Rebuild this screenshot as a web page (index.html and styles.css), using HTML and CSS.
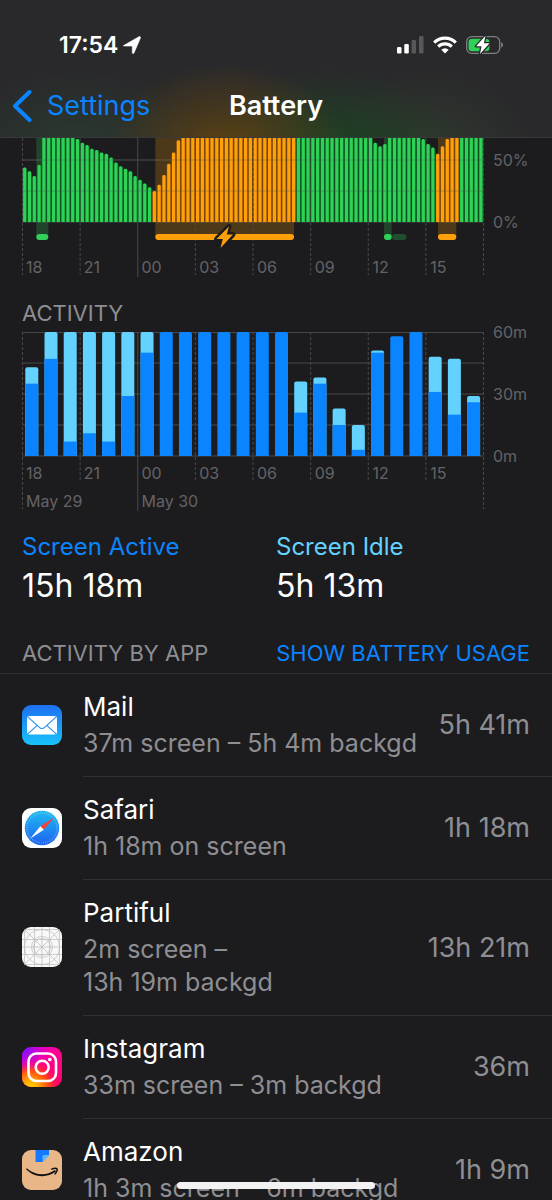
FILE: index.html
```html
<!DOCTYPE html>
<html lang="en">
<head>
<meta charset="utf-8">
<meta name="viewport" content="width=device-width, initial-scale=1">
<title>Battery</title>
<link rel="stylesheet" href="styles.css">
</head>
<body>
<header class="topbar">
  <div class="status">
    <div class="status-left">
      <span class="clock">17:54</span>
      <svg class="icon-location" viewBox="0 0 18 18" aria-hidden="true"><path d="M1 9.300 16 .7c.9-.5 1.800.4 1.400 1.300L11 16.900c-.5 1.100-1.700.9-1.700-.3V10H1.600C.3 10 0 9.800 1 9.300z" fill="#fff" stroke="#fff" stroke-width=".6" stroke-linejoin="round"/></svg>
    </div>
    <div class="status-right">
      <svg class="icon-signal" viewBox="0 0 27 18" aria-hidden="true">
        <rect x="0" y="11" width="4.500" height="6.500" rx="1.300" fill="#fff"/><rect x="7.300" y="8" width="4.500" height="9.500" rx="1.300" fill="#fff"/><rect x="14.600" y="4" width="4.500" height="13.500" rx="1.300" fill="#58585a"/><rect x="22" y="0" width="4.500" height="17.500" rx="1.300" fill="#58585a"/>
      </svg>
      <svg class="icon-wifi" viewBox="0 0 24 18" aria-hidden="true"><g fill="none" stroke="#fff" stroke-width="3.200"><path d="M1.200 6.600a15.300 15.300 0 0 1 21.600 0"/><path d="M5.200 10.700a9.600 9.600 0 0 1 13.600 0"/></g><path d="M8.300 13.700a5.300 5.300 0 0 1 7.400 0L12 17.500z" fill="#fff"/></svg>
      <svg class="icon-battery" viewBox="0 0 38 20" aria-hidden="true">
        <rect x=".7" y="1.700" width="33" height="16.600" rx="5" fill="none" stroke="#808083" stroke-width="1.300"/>
        <path d="M35.200 7.300c2.400.8 2.400 4.600 0 5.400z" fill="#808083"/>
        <path d="M6 3.800h14a3.500 3.500 0 0 1 3.500 3.500v5.400a3.500 3.500 0 0 1-3.500 3.500H6a3.500 3.500 0 0 1-3.500-3.500V7.300A3.500 3.500 0 0 1 6 3.800z" fill="#30d158"/>
        <path d="M19.500.8 10 11.300h5.500L14 19l9.600-10.700h-5.700z" fill="#fff" stroke="#29292b" stroke-width="2.600" stroke-linejoin="round" paint-order="stroke"/>
      </svg>
    </div>
  </div>
  <nav class="nav">
    <a class="back" href="#settings">
      <svg class="icon-back" viewBox="0 0 20 34" aria-hidden="true"><path d="M17.500 3 3 17l14.500 14" fill="none" stroke="#0a84ff" stroke-width="4" stroke-linecap="round" stroke-linejoin="round"/></svg>
      <span>Settings</span>
    </a>
    <h1 class="title">Battery</h1>
  </nav>
</header>

<main class="content">
  <section class="chart chart-level" aria-label="Battery level">
    <svg class="plot" id="level" viewBox="0 0 462 179" preserveAspectRatio="none" aria-hidden="true"></svg>
    <div class="hours"><span>18</span><span>21</span><span>00</span><span>03</span><span>06</span><span>09</span><span>12</span><span>15</span></div>
    <div class="scale"><span>100%</span><span>50%</span><span>0%</span></div>
  </section>

  <h2 class="heading chart-heading">ACTIVITY</h2>
  <section class="chart chart-activity" aria-label="Activity">
    <svg class="plot" id="activity" viewBox="0 0 462 179" preserveAspectRatio="none" aria-hidden="true"></svg>
    <div class="hours"><span>18</span><span>21</span><span>00</span><span>03</span><span>06</span><span>09</span><span>12</span><span>15</span><span class="day">May 29</span><span class="day">May 30</span></div>
    <div class="scale"><span>60m</span><span>30m</span><span>0m</span></div>
  </section>

  <dl class="totals">
    <div><dt class="active">Screen Active</dt><dd>15h 18m</dd></div>
    <div><dt class="idle">Screen Idle</dt><dd>5h 13m</dd></div>
  </dl>

  <div class="list-header">
    <h2 class="heading">ACTIVITY BY APP</h2>
    <button class="toggle" type="button">SHOW BATTERY USAGE</button>
  </div>
  <ul class="apps">
    <li class="app">
      <svg class="app-icon" viewBox="0 0 40 40" aria-hidden="true">
        <defs><linearGradient id="mail" x1="0" y1="0" x2="0" y2="1"><stop offset="0" stop-color="#1e6ff2"/><stop offset="1" stop-color="#19c3fb"/></linearGradient></defs>
        <rect width="40" height="40" rx="9" fill="url(#mail)"/><rect x="5" y="11" width="30" height="18.500" rx="2.500" fill="#fff"/>
        <path d="m5.800 11.800 11.300 10.300c1.700 1.600 4.100 1.600 5.800 0l11.300-10.300M5.800 28.800l9.500-8.500M34.200 28.800l-9.500-8.500" fill="none" stroke="#1f8ff5" stroke-width="1.100"/>
      </svg>
      <div class="row"><div class="info"><h3>Mail</h3><p>37m screen – 5h 4m backgd</p></div><span class="time">5h 41m</span></div>
    </li>
    <li class="app">
      <svg class="app-icon" viewBox="0 0 40 40" aria-hidden="true">
        <defs><linearGradient id="safari" x1="0" y1="0" x2="0" y2="1"><stop offset="0" stop-color="#1dbcf2"/><stop offset="1" stop-color="#1f62ef"/></linearGradient></defs>
        <rect width="40" height="40" rx="9" fill="#fff"/><circle cx="20" cy="20" r="17.200" fill="url(#safari)"/>
        <circle cx="20" cy="20" r="15" fill="none" stroke="#fff" stroke-opacity=".5" stroke-width="1.600" stroke-dasharray=".5 1.463"/>
        <path d="M32 9.500 18.300 18.200l3.500 3.600z" fill="#f8403a"/><path d="M8.300 30.500 18.300 18.200l3.500 3.600z" fill="#fff"/>
      </svg>
      <div class="row"><div class="info"><h3>Safari</h3><p>1h 18m on screen</p></div><span class="time">1h 18m</span></div>
    </li>
    <li class="app">
      <svg class="app-icon" viewBox="0 0 40 40" aria-hidden="true">
        <defs><clipPath id="tile"><rect width="40" height="40" rx="9"/></clipPath></defs>
        <rect width="40" height="40" rx="9" fill="#f8f8f8"/>
        <g clip-path="url(#tile)" fill="none" stroke="#bababb" stroke-width=".7"><path d="M2.500 0v40M12.500 0v40M20 0v40M27.500 0v40M37.500 0v40M0 2.500h40M0 12.500h40M0 20h40M0 27.500h40M0 37.500h40M0 0l40 40M40 0 0 40"/><circle cx="20" cy="20" r="17.500"/><circle cx="20" cy="20" r="10.500"/><circle cx="20" cy="20" r="8.300"/></g>
      </svg>
      <div class="row"><div class="info"><h3>Partiful</h3><p>2m screen –<br>13h 19m backgd</p></div><span class="time">13h 21m</span></div>
    </li>
    <li class="app">
      <svg class="app-icon" viewBox="0 0 40 40" aria-hidden="true">
        <defs>
          <linearGradient id="ig-base" x1="0" y1="0" x2="1" y2="1"><stop offset="0" stop-color="#d400e8"/><stop offset=".5" stop-color="#ff0090"/><stop offset="1" stop-color="#ff0066"/></linearGradient>
          <radialGradient id="ig-warm" cx=".2" cy="1.050" r=".8"><stop offset="0" stop-color="#ffd600"/><stop offset=".25" stop-color="#ffb000"/><stop offset=".6" stop-color="#ff4a10" stop-opacity=".95"/><stop offset="1" stop-color="#ff0069" stop-opacity="0"/></radialGradient>
          <radialGradient id="ig-cool" cx="0" cy="0" r=".65"><stop offset="0" stop-color="#5a1cff"/><stop offset="1" stop-color="#d300e8" stop-opacity="0"/></radialGradient>
        </defs>
        <rect width="40" height="40" rx="9" fill="url(#ig-base)"/><rect width="40" height="40" rx="9" fill="url(#ig-warm)"/><rect width="40" height="40" rx="9" fill="url(#ig-cool)"/>
        <rect x="6.500" y="6.500" width="27.500" height="27.500" rx="8" fill="none" stroke="#fff" stroke-width="2.600"/><circle cx="20.200" cy="20.200" r="6.500" fill="none" stroke="#fff" stroke-width="2.600"/><circle cx="27.800" cy="12.600" r="1.800" fill="#fff"/>
      </svg>
      <div class="row"><div class="info"><h3>Instagram</h3><p>33m screen – 3m backgd</p></div><span class="time">36m</span></div>
    </li>
    <li class="app">
      <svg class="app-icon" viewBox="0 0 40 40" aria-hidden="true">
        <rect width="40" height="40" rx="9" fill="#e9b787"/><path d="M13.500 0H27v5l-6.500 7h-7z" fill="#1479ff"/><path d="M27 5v.8L20.500 12V6.500q0-1.500 1.500-1.500z" fill="#62b5ff"/>
        <path d="M4.700 18.300c8.800 7.500 19.500 8 28.300 1.800l.9 1.400C24.500 28.500 12.300 27.500 4 19.300z" fill="#111"/><path d="M29.700 19.100c2.400-.9 4.700-.8 5.300-.2.500.8-.4 3-1.900 5" fill="none" stroke="#111" stroke-width="1.500" stroke-linecap="round"/>
      </svg>
      <div class="row"><div class="info"><h3>Amazon</h3><p>1h 3m screen – 6m backgd</p></div><span class="time">1h 9m</span></div>
    </li>
  </ul>
</main>
<div class="home-indicator"></div>
<script src="charts.js"></script>
</body>
</html>
```

FILE: charts.js
```js
const NS = 'http://www.w3.org/2000/svg';
const WIDTH = 461;
const HEIGHT = 124;

function add(svg, tag, attrs) {
  const el = document.createElementNS(NS, tag);
  for (const key in attrs) el.setAttribute(key, attrs[key]);
  svg.appendChild(el);
}

function hline(svg, y, cls) {
  add(svg, 'line', { x1: 0.5, x2: WIDTH + 0.5, y1: y, y2: y, class: cls });
}

function vlines(svg, bottoms) {
  bottoms.forEach((bottom, i) => {
    const x = 0.5 + (i * WIDTH) / 8;
    add(svg, 'line', { x1: x, x2: x, y1: 0, y2: bottom, class: i === 2 ? 'grid' : 'grid dashed' });
  });
}

function roundedTop(x, y, w, h, r) {
  return `M${x} ${y + h}V${y + r}q0 ${-r} ${r} ${-r}h${w - 2 * r}q${r} 0 ${r} ${r}v${h - r}z`;
}

/* Battery level, one value per quarter hour */
const full = n => Array(n).fill(88);
const levels = [
  44, 41, 37, 46, ...full(7), 67, 64, 62, 59, 58, 56, 55, 52, 48, 45, 43, 41, 37, 34, 31, 28,
  25, 30, 38, 47, 56, 66, ...full(40), 64, 61, 63, ...full(7), 67, 63, 60, 55, 61, 67, ...full(7)
];
const charging = i => (i >= 27 && i <= 56) || (i >= 86 && i <= 90);

const level = document.getElementById('level');
for (const y of [31, 62, 93, 124]) hline(level, y, 'grid');
const sessions = [
  [14.300, 26.300, 'green'], [133.300, 272, 'orange'], [362, 369.700, 'green'], [416, 434.300, 'orange']
];
for (const [from, to, cls] of sessions) {
  add(level, 'rect', { x: from, y: 0, width: to - from, height: 139, class: 'band ' + cls });
}
levels.forEach((value, i) => {
  const pitch = WIDTH / 96;
  const x = 0.5 + i * pitch;
  const h = (value / 100) * HEIGHT;
  const cls = charging(i) ? 'orange' : 'green';
  add(level, 'rect', { x, y: HEIGHT - h + 1, width: pitch, height: h - 1, class: 'shade ' + cls });
  add(level, 'path', { d: roundedTop(x + 0.6, HEIGHT - h, 3.2, h, 1.3), class: cls });
});
for (const y of [62, 93]) hline(level, y, 'grid faint');
vlines(level, [177, 177, 179, 177, 177, 177, 177, 177, 177]);
add(level, 'rect', { x: 370, y: 136, width: 14.500, height: 6, rx: 3, class: 'dim green' });
for (const [from, to, cls] of sessions) {
  add(level, 'rect', { x: from, y: 136, width: to - from, height: 6, rx: 3, class: cls });
}
add(level, 'path', { d: 'M207 128.500 194.500 141h6.300L198.500 150l12.500-13.500h-6.300z', class: 'bolt orange' });

/* Screen time per hour in minutes: [total, active] */
const hours = [
  [43, 35], [60, 47], [60, 7], [60, 11], [60, 7], [60, 29], [60, 50],
  [60, 60], [60, 60], [60, 60], [60, 60], [60, 60], [60, 60], [60, 60],
  [36, 21], [38, 35], [23, 15], [15, 3], [51, 50], [58, 58], [60, 60], [48, 31], [47, 20], [29, 26]
];
const activity = document.getElementById('activity');
for (const y of [0.5, 31, 62, 93, 124]) hline(activity, y, 'grid');
vlines(activity, [177, 149, 179, 149, 149, 149, 149, 149, 177]);
hours.forEach(([total, active], i) => {
  const x = 3.300 + (i * WIDTH) / 24;
  const t = (total / 60) * HEIGHT;
  const a = (active / 60) * HEIGHT;
  add(activity, 'path', { d: roundedTop(x, HEIGHT - t, 13, t, 2), class: total === active ? 'blue' : 'cyan' });
  if (total !== active) add(activity, 'rect', { x, y: HEIGHT - a, width: 13, height: a, class: 'blue' });
});
```

FILE: styles.css
```css
* { box-sizing: border-box; }

body {
  margin: 0;
  height: 100vh;
  overflow-y: auto;
  scrollbar-width: none;
  background: #1c1c1e;
  color: #fff;
  font-family: Inter, "Liberation Sans", sans-serif;
}

h1, h2, h3, p, ul, dl, dd { margin: 0; padding: 0; font-weight: 400; }

.topbar {
  position: fixed;
  inset: 0 0 auto 0;
  z-index: 1;
  height: 138px;
  padding-top: 28px;
  border-bottom: 1px solid #39393b;
  background:
    radial-gradient(ellipse 120px 85px at 41% 108%, #5c4212 0%, #5c421200 100%),
    radial-gradient(ellipse 130px 85px at 60% 112%, #1c4422 0%, #1c442200 100%),
    radial-gradient(ellipse 130px 80px at 14% 110%, #2a3a30 0%, #2a3a3000 100%),
    radial-gradient(ellipse 100px 80px at 78% 110%, #30382e 0%, #30382e00 100%),
    #29292b;
}

.status {
  display: flex;
  justify-content: space-between;
  align-items: center;
  height: 34px;
  padding: 0 48px 0 59px;
}
.status-left { display: flex; align-items: center; gap: 5px; }
.status-right { display: flex; align-items: center; gap: 9px; }
.clock { font-size: 23px; line-height: 28px; font-weight: 600; }
.icon-location { width: 18px; height: 18px; }
.icon-signal { width: 27px; height: 18px; }
.icon-wifi { width: 24px; height: 18px; }
.icon-battery { width: 38px; height: 20px; }

.nav {
  display: grid;
  grid-template-columns: 1fr auto 1fr;
  align-items: center;
  height: 52px;
  margin-top: 18px;
  padding: 0 12px;
}
.back { display: flex; align-items: center; gap: 15px; color: #0a84ff; font-size: 27px; line-height: 34px; text-decoration: none; }
.icon-back { width: 20px; height: 34px; }
.title { font-size: 27px; line-height: 34px; font-weight: 600; }

.content { padding-top: 98px; }

.chart {
  display: grid;
  grid-template-columns: 1fr 59px;
  column-gap: 9px;
  padding-left: 22px;
  color: #636366;
  font-size: 16px;
  line-height: 20px;
}
.plot { grid-area: 1 / 1; display: block; width: 100%; height: 179px; }
.hours {
  grid-area: 1 / 1;
  align-self: start;
  display: grid;
  grid-template-columns: repeat(8, 1fr);
  row-gap: 8px;
}
.hours span { padding-left: 4px; }
.chart-level .hours { padding-top: 159px; }
.chart-activity .hours { padding-top: 131px; }
.hours .day { grid-column: span 2; }
.scale {
  grid-area: 1 / 2;
  display: flex;
  flex-direction: column;
  justify-content: space-between;
  height: 144px;
  margin-top: -10px;
}

.grid { stroke: #48484a; stroke-width: 1; }
.dashed { stroke-dasharray: 3 2; }
.faint { opacity: 0.3; }
.green { fill: #30d158; }
.orange { fill: #ff9f0a; }
.blue { fill: #0a84ff; }
.cyan { fill: #64d2ff; }
.band { opacity: 0.22; }
.dim { opacity: 0.28; }
.shade.green { fill: #0b5c20; }
.shade.orange { fill: #7d4a0a; }
.bolt { stroke: #1c1c1e; stroke-width: 5; stroke-linejoin: round; paint-order: stroke; }

.heading { color: #8e8e93; font-size: 22px; line-height: 28px; }
.chart-heading { padding: 22px 22px 5px; }

.totals { display: grid; grid-template-columns: 1fr 1fr; padding: 20px 22px 0; }
.totals dt { font-size: 24px; line-height: 32px; }
.totals dd { margin-top: 3px; font-size: 32px; line-height: 40px; }
.active { color: #0a84ff; }
.idle { color: #64d2ff; }

.list-header {
  display: flex;
  justify-content: space-between;
  padding: 33px 22px 6px;
  border-bottom: 1px solid #303033;
}
.toggle { padding: 0; border: 0; background: none; color: #0a84ff; font: inherit; font-size: 22px; line-height: 28px; }

.apps { list-style: none; }
.app { display: flex; align-items: center; gap: 21px; padding-left: 22px; }
.app-icon { flex: none; width: 40px; height: 40px; margin-bottom: 2px; }
.row {
  flex: 1;
  display: flex;
  justify-content: space-between;
  align-items: center;
  padding: 16px 22px 16px 0;
  border-bottom: 1px solid #303033;
}
.info h3 { font-size: 26px; line-height: 34px; }
.info p { margin-top: 3px; color: #8e8e93; font-size: 25px; line-height: 33px; }
.time { color: #8e8e93; font-size: 27px; line-height: 34px; white-space: nowrap; }

.home-indicator {
  position: fixed;
  left: 50%;
  bottom: 11px;
  z-index: 1;
  width: 198px;
  height: 7px;
  margin-left: -99px;
  border-radius: 4px;
  background: #f2f2f3;
}
```
